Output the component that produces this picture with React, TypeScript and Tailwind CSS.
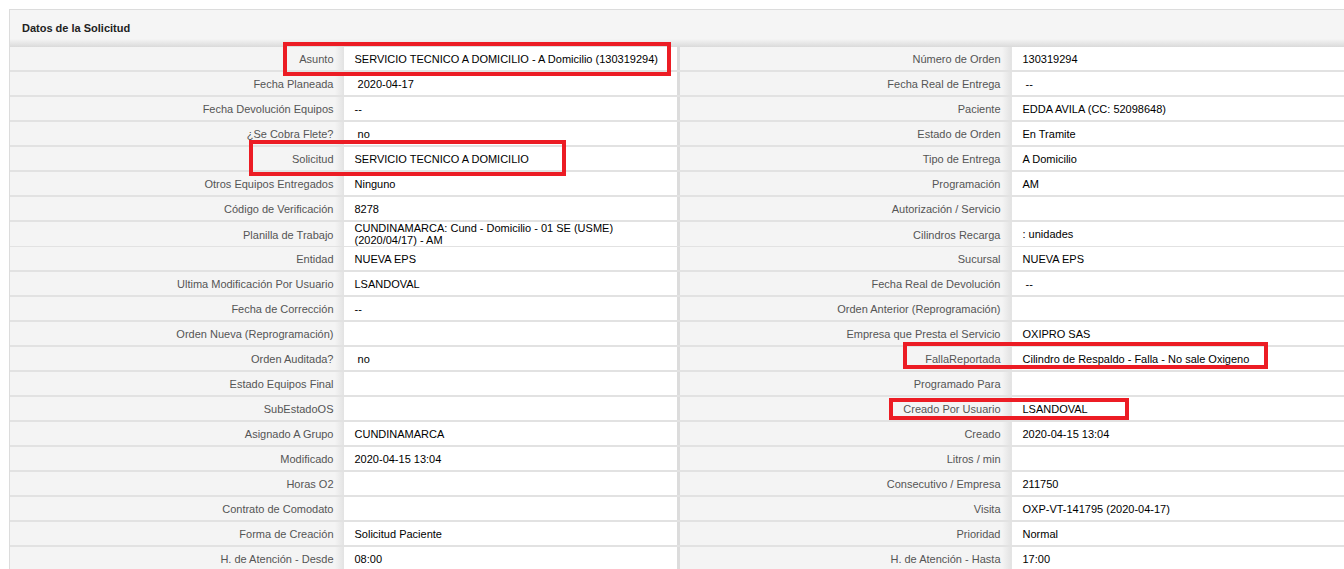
import React from 'react';

// label / value pairs for each side of the request detail table
const leftRows: [string, string][] = [
  ['Asunto', 'SERVICIO TECNICO A DOMICILIO - A Domicilio (130319294)'],
  ['Fecha Planeada', '\u00a02020-04-17'],
  ['Fecha Devolución Equipos', '--'],
  ['¿Se Cobra Flete?', '\u00a0no'],
  ['Solicitud', 'SERVICIO TECNICO A DOMICILIO'],
  ['Otros Equipos Entregados', 'Ninguno'],
  ['Código de Verificación', '8278'],
  ['Planilla de Trabajo', 'CUNDINAMARCA: Cund - Domicilio - 01 SE (USME) (2020/04/17) - AM'],
  ['Entidad', 'NUEVA EPS'],
  ['Ultima Modificación Por Usuario', 'LSANDOVAL'],
  ['Fecha de Corrección', '--'],
  ['Orden Nueva (Reprogramación)', ''],
  ['Orden Auditada?', '\u00a0no'],
  ['Estado Equipos Final', ''],
  ['SubEstadoOS', ''],
  ['Asignado A Grupo', 'CUNDINAMARCA'],
  ['Modificado', '2020-04-15 13:04'],
  ['Horas O2', ''],
  ['Contrato de Comodato', ''],
  ['Forma de Creación', 'Solicitud Paciente'],
  ['H. de Atención - Desde', '08:00'],
];

const rightRows: [string, string][] = [
  ['Número de Orden', '130319294'],
  ['Fecha Real de Entrega', '\u00a0--'],
  ['Paciente', 'EDDA AVILA (CC: 52098648)'],
  ['Estado de Orden', 'En Tramite'],
  ['Tipo de Entrega', 'A Domicilio'],
  ['Programación', 'AM'],
  ['Autorización / Servicio', ''],
  ['Cilindros Recarga', ': unidades'],
  ['Sucursal', 'NUEVA EPS'],
  ['Fecha Real de Devolución', '\u00a0--'],
  ['Orden Anterior (Reprogramación)', ''],
  ['Empresa que Presta el Servicio', 'OXIPRO SAS'],
  ['FallaReportada', 'Cilindro de Respaldo - Falla - No sale Oxigeno'],
  ['Programado Para', ''],
  ['Creado Por Usuario', 'LSANDOVAL'],
  ['Creado', '2020-04-15 13:04'],
  ['Litros / min', ''],
  ['Consecutivo / Empresa', '211750'],
  ['Visita', 'OXP-VT-141795 (2020-04-17)'],
  ['Prioridad', 'Normal'],
  ['H. de Atención - Hasta', '17:00'],
];

const labelCls =
  'flex items-center justify-end pr-[10px] pt-[2px] text-[#555] bg-[linear-gradient(to_left,#e3e3e3,#f4f4f4_9px)]';
const valueCls = 'flex items-center pl-[11px] pr-2 text-black bg-white leading-[12px]';

const Row: React.FC<{ left: [string, string]; right: [string, string] }> = ({ left, right }) => (
  <div className="grid grid-cols-4 h-[25px] border-b-2 border-[#e2e2e2]">
    <div className={labelCls}>{left[0]}</div>
    <div className={valueCls}>{left[1]}</div>
    <div className={`${labelCls} border-l-[3px] border-[#dcdcdc]`}>{right[0]}</div>
    <div className={`${valueCls} border-l border-[#e4e4e4]`}>{right[1]}</div>
  </div>
);

export default function App() {
  return (
    <div
      className="relative w-[1344px] h-[569px] overflow-hidden bg-white pl-[9px] pt-[9px] text-[11px]"
      style={{ fontFamily: '"Liberation Sans", Arial, sans-serif' }}
    >
      <div className="border-l border-t border-[#dcdcdc]">
        <div className="h-[37px] pl-[12px] flex items-center font-bold text-[#222] bg-[linear-gradient(to_bottom,#f5f5f5_78%,#dadada)]">
          Datos de la Solicitud
        </div>
        {leftRows.map((l, i) => (
          <Row key={i} left={l} right={rightRows[i]} />
        ))}
      </div>

      {/* highlight boxes drawn on top of the table */}
      <div className="absolute left-[283px] top-[42px] w-[388px] h-[34px] border-[4px] border-[#ec1c24]" />
      <div className="absolute left-[249px] top-[140px] w-[317px] h-[36px] border-[4px] border-[#ec1c24]" />
      <div className="absolute left-[903px] top-[342px] w-[365px] h-[27px] border-[4px] border-[#ec1c24]" />
      <div className="absolute left-[889px] top-[398px] w-[240px] h-[22px] border-[4px] border-[#ec1c24]" />
    </div>
  );
}
